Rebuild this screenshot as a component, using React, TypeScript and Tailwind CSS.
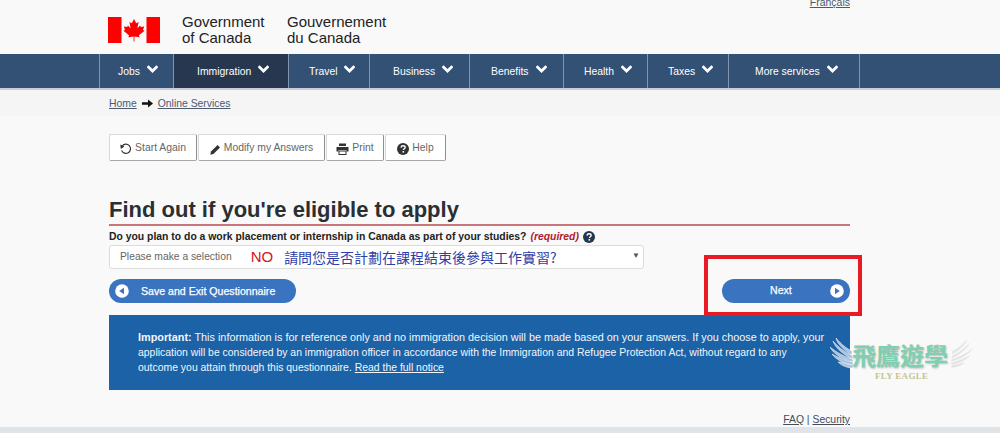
import React from "react";

const navItems = [
  { label: "Jobs", w: "w-[74px]", pl: "pl-[18px]" },
  { label: "Immigration", w: "w-[115px]", pl: "pl-[23px]", active: true },
  { label: "Travel", w: "w-[81px]", pl: "pl-[20px]" },
  { label: "Business", w: "w-[100px]", pl: "pl-[23px]" },
  { label: "Benefits", w: "w-[94px]", pl: "pl-[21px]" },
  { label: "Health", w: "w-[84px]", pl: "pl-[20px]" },
  { label: "Taxes", w: "w-[81px]", pl: "pl-[20px]" },
  { label: "More services", w: "w-[130px]", pl: "pl-[26px]" },
];

function Chevron() {
  return (
    <svg width="11" height="9" viewBox="0 0 11 9" className="mb-[3px] shrink-0">
      <path d="M1.6 2.2 L5.5 6 L9.4 2.2" fill="none" stroke="#fff" strokeWidth="2.8" strokeLinecap="square" />
    </svg>
  );
}

function MapleFlag() {
  return (
    <svg width="52" height="26" viewBox="0 0 52 26" className="block">
      <rect x="0" y="0" width="13.5" height="26" fill="#f00" />
      <rect x="38.5" y="0" width="13.5" height="26" fill="#f00" />
      <path
        d="M26 2 L23.8 6.2 L21.4 5 L22.6 11.2 L19.9 8.4 L19.2 10 L15.8 9.4 L17 13 L15.4 13.8 L21 18.2 L20.4 20.2 L25.6 19.6 L25.6 24.5 L26.4 24.5 L26.4 19.6 L31.6 20.2 L31 18.2 L36.6 13.8 L35 13 L36.2 9.4 L32.8 10 L32.1 8.4 L29.4 11.2 L30.6 5 L28.2 6.2 Z"
        fill="#f00"
      />
    </svg>
  );
}

function ToolButton({ w, icon, label }: { w: string; icon: React.ReactNode; label: string }) {
  return (
    <div className={`${w} h-[27px] flex items-center justify-center gap-[3px] bg-white border border-[#d8d8d8] border-r-[#8f8f8f] border-b-[#a8a8a8] rounded-[2px] text-[10.4px] text-[#666]`}>
      <span className="mt-[3px] shrink-0">{icon}</span>
      <span>{label}</span>
    </div>
  );
}

function HelpIcon({ size = 13, color = "#333" }: { size?: number; color?: string }) {
  return (
    <svg width={size} height={size} viewBox="0 0 13 13" className="block">
      <circle cx="6.5" cy="6.5" r="6.5" fill={color} />
      <path d="M4.4 5 C4.5 3.5 5.5 3 6.6 3 C7.9 3 8.8 3.8 8.8 4.8 C8.8 6.2 6.9 6.2 6.9 7.7" fill="none" stroke="#fff" strokeWidth="1.5" />
      <rect x="6" y="8.7" width="1.7" height="1.7" fill="#fff" />
    </svg>
  );
}

function Wing({ flip, className, color }: { flip?: boolean; className: string; color: string }) {
  return (
    <svg width="23" height="31" viewBox="0 0 23 31" className={className} style={flip ? { transform: "scaleX(-1)" } : undefined}>
      <g fill={color} stroke="#fff" strokeWidth="0.5">
        <path d="M23 30 C18 30 12 28 8 24 C12 24 18 26 23 27 Z" />
        <path d="M23 27 C15 26 6 22 2 16 C8 19 16 23 23 24 Z" />
        <path d="M23 24 C14 22 3 16 0 9 C6 14 15 19 23 21 Z" />
        <path d="M23 21 C15 18 5 10 3 3 C8 9 16 15 22 17 Z" />
        <path d="M22 17 C15 13 7 6 6 0 C11 6 17 11 22 13 Z" />
      </g>
    </svg>
  );
}

export default function App() {
  return (
    <div className="w-[1000px] h-[433px] overflow-hidden relative bg-[#f9f9f9] text-[#333] font-['Liberation_Sans',Arial,sans-serif]">
      {/* Header */}
      <header className="h-[54px] pl-[108px] flex relative">
        <div className="pt-[17px]"><MapleFlag /></div>
        <div className="ml-[22px] pt-[14px] text-[15px] leading-[15.5px] text-[#222] w-[105px]">Government<br />of Canada</div>
        <div className="pt-[14px] text-[15px] leading-[15.5px] text-[#222]">Gouvernement<br />du Canada</div>
        <a className="absolute right-[150px] top-[-5px] text-[10.5px] leading-[14px] underline text-[#4a5a70]">Français</a>
      </header>

      {/* Nav */}
      <nav className="h-[36px] bg-[#335075] border-b-2 border-[#c9ced6] pl-[99px] flex">
        <div className="flex border-l border-[#8194ad] border-r">
          {navItems.map((n, i) => (
            <div
              key={n.label}
              className={`${n.w} ${n.pl} ${n.active ? "bg-[#26374f]" : ""} ${i < navItems.length - 1 ? "border-r border-[#8194ad]" : ""} flex items-center gap-[7px] text-[10.4px] text-white`}
            >
              <span className="mt-[2px]">{n.label}</span>
              <Chevron />
            </div>
          ))}
        </div>
      </nav>

      {/* Breadcrumb */}
      <div className="h-[26px] bg-[#f5f5f5] pl-[109px] pt-[1px] flex items-center gap-[5px] text-[10.4px] text-[#4a5a70]">
        <a className="underline">Home</a>
        <svg width="11" height="9" viewBox="0 0 11 9">
          <path d="M0 3.2 H6 V0.5 L11 4.5 L6 8.5 V5.8 H0 Z" fill="#111" />
        </svg>
        <a className="underline">Online Services</a>
      </div>

      {/* Main */}
      <main className="w-[741px] ml-[109px]">
        <div className="mt-[18px] flex gap-[1px]">
          <ToolButton
            w="w-[88px]"
            label="Start Again"
            icon={
              <svg width="12" height="12" viewBox="0 0 12 12" className="block">
                <path d="M2.2 3 A4.6 4.6 0 1 1 1.6 7.4" fill="none" stroke="#333" strokeWidth="1.2" />
                <path d="M0.3 1.5 L4.4 3.6 L0.8 6 Z" fill="#333" />
              </svg>
            }
          />
          <ToolButton
            w="w-[127px]"
            label="Modify my Answers"
            icon={
              <svg width="11" height="11" viewBox="0 0 11 11" className="block">
                <path d="M0.3 10.7 L1 7.6 L7.6 1 L10 3.4 L3.4 10 Z" fill="#333" />
              </svg>
            }
          />
          <ToolButton
            w="w-[58px]"
            label="Print"
            icon={
              <svg width="13" height="12" viewBox="0 0 13 12" className="block">
                <path d="M3 0.5 H10 V3 H3 Z M0.5 4 H12.5 V8.5 H10.5 V7 H2.5 V8.5 H0.5 Z" fill="#333" />
                <rect x="3" y="8" width="7" height="3.5" fill="none" stroke="#333" strokeWidth="1" />
              </svg>
            }
          />
          <ToolButton w="w-[61px]" label="Help" icon={<HelpIcon size={12} />} />
        </div>

        <h1 className="mt-[35px] h-[28px] text-[22px] leading-[28px] font-bold text-[#2a2f33] border-b-2 border-[#c9757c] box-content">
          Find out if you're eligible to apply
        </h1>

        <div className="mt-[3px] h-[16px] flex items-center text-[10.4px] font-bold text-[#222]">
          <span>Do you plan to do a work placement or internship in Canada as part of your studies?</span>
          <span className="ml-[4px] italic text-[#b0202c]">(required)</span>
          <span className="ml-[4px]"><HelpIcon size={12} color="#26374f" /></span>
        </div>

        <div className="w-[535px] h-[24px] bg-white border border-[#dcdcdc] rounded-[3px] flex items-center pl-[10px] relative">
          <span className="text-[10.3px] text-[#666]">Please make a selection</span>
          <span className="ml-[19px] text-[15px] text-[#d5121e]">NO</span>
          <span className="ml-[11px] text-[14px] text-[#2f3ea8] font-['Noto_Sans_CJK_TC','Noto_Sans_CJK_SC',sans-serif]">請問您是否計劃在課程結束後參與工作實習?</span>
          <span className="absolute right-[3px] top-[4px] text-[8px] text-[#555]">▼</span>
        </div>

        <div className="mt-[10px] flex justify-between">
          <div className="w-[187px] h-[24px] rounded-full bg-[#3a74c0] flex items-center pl-[6px] text-[10.6px] text-white [-webkit-text-stroke:0.25px_#fff]">
            <svg width="14" height="14" viewBox="0 0 14 14" className="shrink-0">
              <circle cx="7" cy="7" r="6.8" fill="#fff" />
              <path d="M9 3.8 V10.2 L4.2 7 Z" fill="#3a74c0" />
            </svg>
            <span className="ml-[12px] mt-[1px]">Save and Exit Questionnaire</span>
          </div>
          <div className="w-[128px] h-[24px] rounded-full bg-[#3a74c0] flex items-center text-[10.6px] text-white [-webkit-text-stroke:0.25px_#fff]">
            <span className="ml-[48px] w-[21px]">Next</span>
            <svg width="14" height="14" viewBox="0 0 14 14" className="ml-[39px] shrink-0">
              <circle cx="7" cy="7" r="6.8" fill="#fff" />
              <path d="M5 3.8 V10.2 L9.8 7 Z" fill="#3a74c0" />
            </svg>
          </div>
        </div>

        <div className="mt-[12px] h-[75px] bg-[#1b62a7] pl-[29px] pt-[15px] text-[10.43px] leading-[15px] text-[#f2f6fb]">
          <span className="text-[10.85px]"><b>Important:</b> This information is for reference only and no immigration decision will be made based on your answers. If you choose to apply, your</span>
          <br />
          application will be considered by an immigration officer in accordance with the Immigration and Refugee Protection Act, without regard to any
          <br />
          outcome you attain through this questionnaire. <a className="underline">Read the full notice</a>
        </div>

        <div className="mt-[22px] h-[15px] flex justify-end text-[10.4px] leading-[15px] text-[#444c5c]">
          <a className="underline">FAQ</a><span>&nbsp;|&nbsp;</span><a className="underline">Security</a>
        </div>
      </main>

      <div className="absolute left-0 right-0 bottom-0 h-[6px] bg-[#e1e4e7]" />

      {/* Red highlight rectangle */}
      <div className="absolute left-[704px] top-[255px] w-[158px] h-[61px] border-[4px] border-[#e81a24]" />

      {/* Watermark */}
      <div className="absolute left-[830px] top-[338px] w-[144px] h-[44px]">
        <Wing className="absolute left-0 top-0" color="#a9c3df" />
        <Wing flip className="absolute right-0 top-0" color="#e4e4e4" />
        <div className="absolute left-[22px] top-[4px] text-[24px] leading-[25px] font-bold text-[#7fcfb0] [text-shadow:1px_1px_2px_#bbb] font-['Noto_Sans_CJK_TC',sans-serif]">飛鷹遊學</div>
        <div className="absolute left-[45px] top-[33px] text-[9px] leading-[10px] font-bold tracking-[0.3px] text-[#c5c38f] font-['Liberation_Serif',serif]">FLY EAGLE</div>
      </div>
    </div>
  );
}
